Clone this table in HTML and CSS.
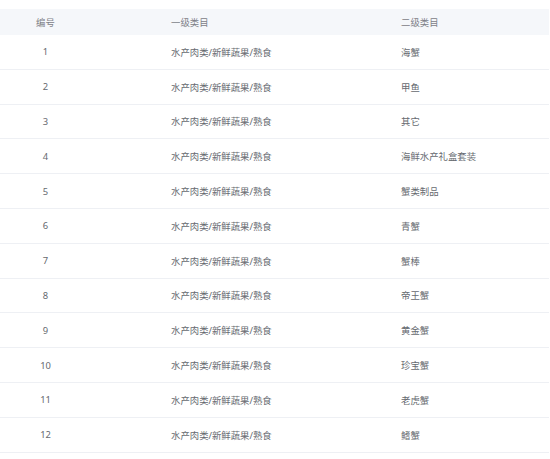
FILE: index.html
```html
<!DOCTYPE html>
<html lang="zh-CN">
<head>
<meta charset="utf-8">
<link rel="stylesheet" href="styles.css">
</head>
<body>
<div class="table">
  <div class="row head">
    <div class="cell c1">编号</div>
    <div class="cell c2">一级类目</div>
    <div class="cell c3">二级类目</div>
  </div>
  <div class="row"><div class="cell c1">1</div><div class="cell c2">水产肉类/新鲜蔬果/熟食</div><div class="cell c3">海蟹</div></div>
  <div class="row"><div class="cell c1">2</div><div class="cell c2">水产肉类/新鲜蔬果/熟食</div><div class="cell c3">甲鱼</div></div>
  <div class="row"><div class="cell c1">3</div><div class="cell c2">水产肉类/新鲜蔬果/熟食</div><div class="cell c3">其它</div></div>
  <div class="row"><div class="cell c1">4</div><div class="cell c2">水产肉类/新鲜蔬果/熟食</div><div class="cell c3">海鲜水产礼盒套装</div></div>
  <div class="row"><div class="cell c1">5</div><div class="cell c2">水产肉类/新鲜蔬果/熟食</div><div class="cell c3">蟹类制品</div></div>
  <div class="row"><div class="cell c1">6</div><div class="cell c2">水产肉类/新鲜蔬果/熟食</div><div class="cell c3">青蟹</div></div>
  <div class="row"><div class="cell c1">7</div><div class="cell c2">水产肉类/新鲜蔬果/熟食</div><div class="cell c3">蟹棒</div></div>
  <div class="row"><div class="cell c1">8</div><div class="cell c2">水产肉类/新鲜蔬果/熟食</div><div class="cell c3">帝王蟹</div></div>
  <div class="row"><div class="cell c1">9</div><div class="cell c2">水产肉类/新鲜蔬果/熟食</div><div class="cell c3">黄金蟹</div></div>
  <div class="row"><div class="cell c1">10</div><div class="cell c2">水产肉类/新鲜蔬果/熟食</div><div class="cell c3">珍宝蟹</div></div>
  <div class="row"><div class="cell c1">11</div><div class="cell c2">水产肉类/新鲜蔬果/熟食</div><div class="cell c3">老虎蟹</div></div>
  <div class="row"><div class="cell c1">12</div><div class="cell c2">水产肉类/新鲜蔬果/熟食</div><div class="cell c3">鳍蟹</div></div>
</div>
</body>
</html>
```
FILE: styles.css
```css
html, body {
  margin: 0;
  padding: 0;
  background: #ffffff;
}
body {
  font-family: "Noto Sans", "Noto Sans CJK SC", sans-serif;
  font-size: 9.4px;
  color: #666a70;
}
.table {
  margin-top: 9px;
  width: 549px;
}
.row {
  display: grid;
  grid-template-columns: 91px 230px 1fr;
  align-items: center;
  height: 34.8px;
  box-sizing: border-box;
  border-bottom: 1px solid #eef0f4;
}
.row.head {
  height: 26px;
  background: #f5f7fa;
  color: #7d8087;
  border-bottom: none;
}
.cell {
  white-space: nowrap;
}
.c1 {
  text-align: center;
}
.c2 {
  padding-left: 80px;
}
.c3 {
  padding-left: 80px;
}
```
